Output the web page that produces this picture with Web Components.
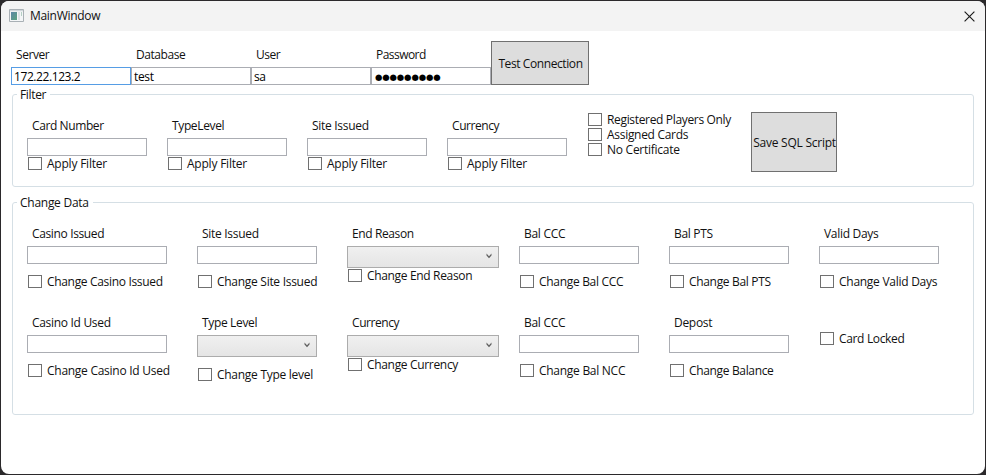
<!DOCTYPE html>
<html lang="en">
<head>
<meta charset="utf-8">
<title>MainWindow</title>
<style>
html,body{margin:0;height:100%;background:#2b292b;overflow:hidden}
body{font:12px/16px "Open Sans","Noto Sans",sans-serif;color:#111}
</style>
</head>
<body>
<main-window></main-window>
<script>
class Base extends HTMLElement{
  a(n,d=''){return this.getAttribute(n)??d}
  render(css,html){
    if(!this.shadowRoot)this.attachShadow({mode:'open'});
    this.shadowRoot.innerHTML=`<style>*{box-sizing:border-box}${css}</style>${html}`;
  }
}
/* Text run whose letter spacing is tuned so it spans a given width. */
customElements.define('fit-text',class extends Base{
  connectedCallback(){
    this.render(':host{display:block;white-space:pre;width:max-content}span{display:inline-block}','<span></span>');
    const s=this.shadowRoot.querySelector('span');
    s.textContent=this.a('text');
    const w=parseFloat(this.a('w'))-.8;
    if(w)s.style.letterSpacing=((w-s.getBoundingClientRect().width)/(s.textContent.length))+'px';
  }
});
customElements.define('check-box',class extends Base{
  connectedCallback(){
    this.render(`:host{display:flex;height:13px;gap:5px;margin-left:1px;align-items:center}
      i{flex:none;width:14px;height:13px;border:1px solid #707070;background:#fff}
      fit-text{line-height:14px;height:13px}`,
      `<i></i><fit-text text="${this.a('text')}" w="${this.a('w')}"></fit-text>`);
  }
});
customElements.define('text-box',class extends Base{
  connectedCallback(){
    this.render(`:host{display:block;height:18px;border:1px solid #abadb3;background:#fff;padding:0 2px;color:#000}
      :host([focused]){border-color:#569de5}
      :host([secret]){font:8.5px/17px "DejaVu Sans",sans-serif;padding-left:3px}
      fit-text{line-height:17px}:host([secret]) fit-text{line-height:18px}`,
      this.hasAttribute('value')?`<fit-text text="${this.a('value')}" w="${this.a('w')}"></fit-text>`:'');
  }
});
customElements.define('combo-box',class extends Base{
  connectedCallback(){
    this.render(`:host{display:flex;height:22px;border:1px solid #acacac;background:linear-gradient(#f0f0f0,#e5e5e5);justify-content:flex-end;padding:6px 6px 0 0}
      svg{display:block}`,
      `<svg width="6" height="6" viewBox="0 0 6 6"><path d="M.5.6 3 3.2 5.5.6V2.6L3 5.2.5 2.6Z" fill="#606060"/></svg>`);
  }
});
customElements.define('form-field',class extends Base{
  connectedCallback(){
    this.render(`:host{display:flex;flex-direction:column;flex:none;width:${this.a('width','120')}px}
      .l{margin:0 0 4px 5px;height:16px}
      check-box{margin-top:${this.a('gap','11')}px}`,
      `<fit-text class="l" text="${this.a('label')}" w="${this.a('lw')}"></fit-text><slot></slot>`+
      (this.hasAttribute('check')?`<check-box text="${this.a('check')}" w="${this.a('cw')}"></check-box>`:''));
  }
});
customElements.define('push-button',class extends Base{
  connectedCallback(){
    this.render(`:host{display:flex;flex:none;align-items:center;justify-content:center;border:1px solid #707070;background:#ddd;padding:2px 0 0 1px}`,
      `<fit-text text="${this.a('text')}" w="${this.a('w')}"></fit-text>`);
  }
});
customElements.define('group-box',class extends Base{
  connectedCallback(){
    this.render(`:host{display:block}
      fieldset{margin:0;height:100%;border:1px solid #d5dfe5;border-radius:3px;padding:0 0 0 14px;min-width:0}
      legend{margin-left:-10px;padding:0 4px 0 3px;height:15px;line-height:15px}`,
      `<fieldset><legend><fit-text text="${this.a('header')}" w="${this.a('w')}"></fit-text></legend><slot></slot></fieldset>`);
  }
});
customElements.define('title-bar',class extends Base{
  connectedCallback(){
    this.render(`:host{display:flex;height:30px;background:#f3f3f3;align-items:center;padding:0 10px 0 8px}
      .x{margin-left:auto}svg{display:block}.i{margin-top:-2px}fit-text{margin-left:6px}`,
      `<svg class="i" width="15" height="13" viewBox="0 0 15 13"><defs><linearGradient id="g" x2="1" y2="1"><stop stop-color="#5b86a6"/><stop offset="1" stop-color="#5aa27e"/></linearGradient></defs>
        <path d="M.5.5h14v12H.5z" fill="#f4f6f7" stroke="#a9b0b5"/><path d="M1 1h13v1.3H1z" fill="#cfd6da"/><path d="M2 3h6v8H2z" fill="url(#g)"/><path d="M9 3h2v8H9z" fill="#dce2e5"/><path d="M12 3h1v4h-1z" fill="#b5cfc4"/></svg>
      <fit-text text="MainWindow" w="71"></fit-text>
      <svg class="x" width="11" height="11" viewBox="0 0 11 11"><path d="M.6.6l9.8 9.8M10.4.6.6 10.4" stroke="#1a1a1a" stroke-width="1.15"/></svg>`);
  }
});
customElements.define('main-window',class extends Base{
  connectedCallback(){
    const T='<text-box></text-box>',C='<combo-box></combo-box>';
    const f=(label,lw,check,cw,width=120,gap=11,ctl=T)=>`<form-field label="${label}" lw="${lw}" check="${check}" cw="${cw}" width="${width}" gap="${gap}">${ctl}</form-field>`;
    this.render(`:host{display:flex;flex-direction:column;width:984px;height:473px;margin:1px;background:#fff;border-radius:8px;overflow:hidden}
      main{padding:10px 11px 0 10px}
      .conn{display:flex;align-items:flex-end;height:44px}
      .conn push-button{width:98px;height:44px}
      .filter{margin:2px 0 0 1px;height:100px}
      .change{margin:8px 0 0 1px;height:220px}
      .frow{display:flex;gap:20px;padding-top:16px}
      .checks{display:flex;flex-direction:column;gap:2px;width:144px;margin:-5px 0 0 0}
      .frow push-button{width:86px;height:60px;margin-top:-6px}
      .grid{display:grid;grid-template-columns:170px 150px 172px 150px 150px 120px;grid-template-rows:89px 89px;padding-top:16px}
      .lock{margin:17px 0 0 1px}`,
    `<title-bar></title-bar><main>
      <div class="conn">
        <form-field label="Server" lw="34"><text-box focused value="172.22.123.2" w="67"></text-box></form-field>
        <form-field label="Database" lw="50"><text-box value="test" w="20.5"></text-box></form-field>
        <form-field label="User" lw="25"><text-box value="sa" w="12.5"></text-box></form-field>
        <form-field label="Password" lw="50.5"><text-box secret value="●●●●●●●●●" w="66.3"></text-box></form-field>
        <push-button text="Test Connection" w="85"></push-button>
      </div>
      <group-box class="filter" header="Filter" w="27"><div class="frow">
        ${f('Card Number',72.5,'Apply Filter',60.8,120,1)}${f('TypeLevel',53,'Apply Filter',60.8,120,1)}${f('Site Issued',57.5,'Apply Filter',60.8,120,1)}${f('Currency',48,'Apply Filter',60.8,120,1)}
        <div class="checks"><check-box text="Registered Players Only" w="124.8"></check-box><check-box text="Assigned Cards" w="82"></check-box><check-box text="No Certificate" w="73.5"></check-box></div>
        <push-button text="Save SQL Script" w="83.5"></push-button>
      </div></group-box>
      <group-box class="change" header="Change Data" w="69.5"><div class="grid">
        ${f('Casino Issued',73,'Change Casino Issued',116.5,140)}
        ${f('Site Issued',57.5,'Change Site Issued',101)}
        ${f('End Reason',62.5,'Change End Reason',106,152,1,C)}
        ${f('Bal CCC',42,'Change Bal CCC',85)}
        ${f('Bal PTS',39.5,'Change Bal PTS',82.5)}
        ${f('Valid Days',55.3,'Change Valid Days',99)}
        ${f('Casino Id Used',79.5,'Change Casino Id Used',123.5,140)}
        ${f('Type Level',56,'Change Type level',96.8,120,11,C)}
        ${f('Currency',48,'Change Currency',91.8,152,1,C)}
        ${f('Bal CCC',42,'Change Bal NCC',87)}
        ${f('Depost',39,'Change Balance',85.3)}
        <check-box class="lock" style="margin-left:1px" text="Card Locked" w="66.3"></check-box>
      </div></group-box>
    </main>`);
    this.shadowRoot.querySelector('.lock').style.marginLeft='1px';
  }
});
</script>
</body>
</html>
